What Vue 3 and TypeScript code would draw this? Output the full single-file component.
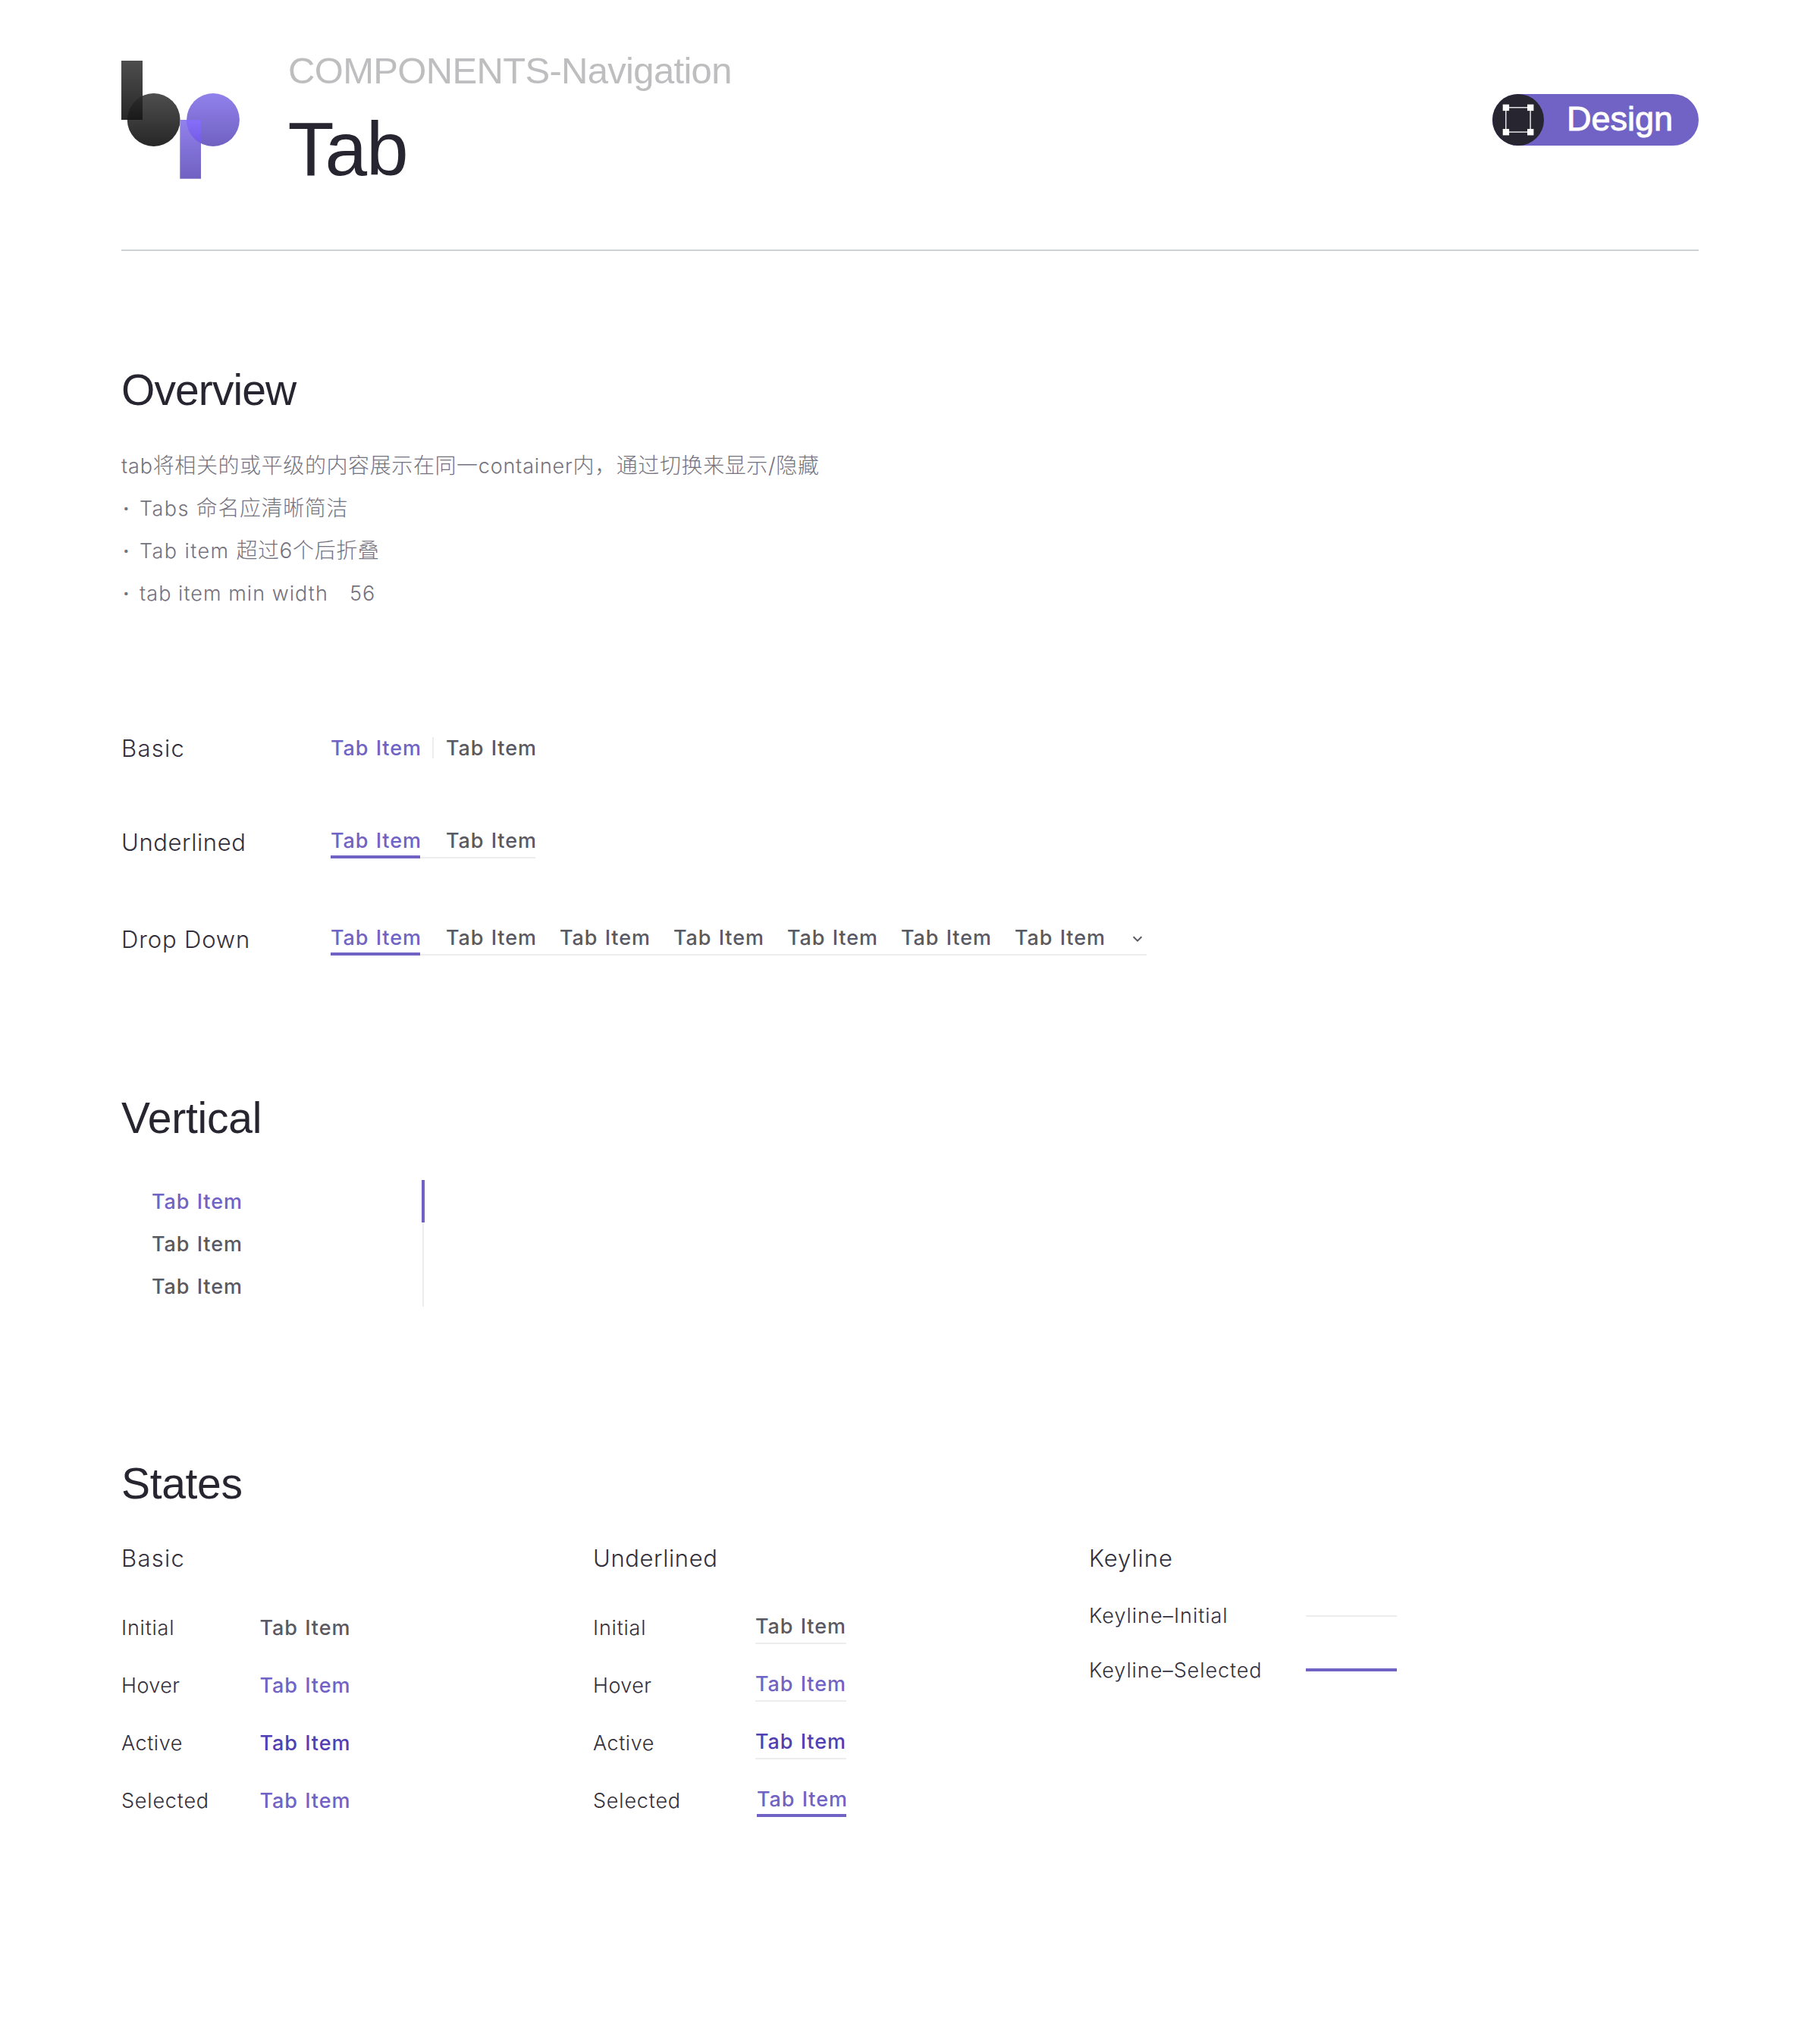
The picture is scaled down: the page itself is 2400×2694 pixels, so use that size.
<script setup lang="ts">
interface Label { text: string; ls: number }
interface StateRow extends Label { state: 'initial' | 'hover' | 'active' | 'selected' }

const rows: StateRow[] = [
  { text: 'Initial', ls: 0.8, state: 'initial' },
  { text: 'Hover', ls: 0.4, state: 'hover' },
  { text: 'Active', ls: 0.55, state: 'active' },
  { text: 'Selected', ls: 0.8, state: 'selected' },
]
const names: Record<string, Label> = {
  basic: { text: 'Basic', ls: 1.3 },
  underlined: { text: 'Underlined', ls: 0.6 },
  dropDown: { text: 'Drop Down', ls: 0.86 },
  keyline: { text: 'Keyline', ls: 0.95 },
}
const keylines: (Label & { kind: 'initial' | 'selected' })[] = [
  { text: 'Keyline–Initial', ls: 0.97, kind: 'initial' },
  { text: 'Keyline–Selected', ls: 0.92, kind: 'selected' },
]
const tracking = (l: Label) => ({ letterSpacing: `${l.ls}px` })
</script>

<template>
  <main class="page">
    <header class="header">
      <svg class="logo" width="157" height="156" viewBox="0 0 157 156">
        <defs>
          <linearGradient id="ink" x1="0" y1="0" x2="0" y2="1">
            <stop offset="0" stop-color="#4e4e4e" /><stop offset="1" stop-color="#272727" />
          </linearGradient>
          <linearGradient id="violet" x1="0" y1="0" x2="0" y2="1">
            <stop offset="0" stop-color="#9181ec" /><stop offset="1" stop-color="#7061c1" />
          </linearGradient>
          <linearGradient id="inkMix" x1="0" y1="0" x2="0" y2="1">
            <stop offset="0" stop-color="#2c2c2c" /><stop offset="1" stop-color="#191919" />
          </linearGradient>
          <linearGradient id="violetMix" x1="0" y1="0" x2="0" y2="1">
            <stop offset="0" stop-color="#866ff8" /><stop offset="1" stop-color="#745be6" />
          </linearGradient>
        </defs>
        <rect width="28" height="78" fill="url(#ink)" />
        <circle cx="42.7" cy="78" r="34.9" fill="url(#ink)" />
        <path d="M28 46.3A34.9 34.9 0 0 0 7.8 78H28Z" fill="url(#inkMix)" />
        <rect x="77.3" y="78" width="27.7" height="77.7" fill="url(#violet)" />
        <circle cx="121" cy="78" r="34.9" fill="url(#violet)" />
        <path d="M86.1 78H105V109A34.9 34.9 0 0 1 86.1 78Z" fill="url(#violetMix)" />
      </svg>
      <div class="titles">
        <div class="crumb">COMPONENTS-Navigation</div>
        <h1>Tab</h1>
      </div>
      <div class="pill">
        <svg width="68" height="68" viewBox="0 0 68 68">
          <circle cx="34" cy="34" r="34" fill="#272530" />
          <rect x="17.8" y="17.8" width="32.3" height="32.3" fill="none" stroke="#fff" stroke-width="1.3" />
          <g fill="#fff">
            <rect x="13.7" y="13.7" width="8.4" height="8.4" /><rect x="46" y="13.7" width="8.4" height="8.4" />
            <rect x="13.7" y="46" width="8.4" height="8.4" /><rect x="46" y="46" width="8.4" height="8.4" />
          </g>
        </svg>
        <span class="pill-text">Design</span>
      </div>
    </header>

    <section>
      <h2 class="h-overview">Overview</h2>
      <div class="copy" lang="zh-CN">
        <p><span class="w-tab">tab</span><span class="zh">将相关的或平级的内容展示在同一</span><span class="w-container">container</span><span class="zh">内，通过切换来显示/隐藏</span></p>
        <p><i>·</i><span class="w-tabs">Tabs </span><span class="zh">命名应清晰简洁</span></p>
        <p><i>·</i><span class="w-tabs">Tab item </span><span class="zh">超过6个后折叠</span></p>
        <p><i>·</i><span class="w-min">tab item min width</span><span class="w-num">56</span></p>
      </div>
    </section>

    <section class="variants">
      <div class="variant v-basic">
        <span class="label" :style="tracking(names.basic)">{{ names.basic.text }}</span>
        <div class="tabs">
          <span class="tab selected">Tab Item</span><span class="divider"></span><span class="tab">Tab Item</span>
        </div>
      </div>
      <div class="variant v-underlined">
        <span class="label" :style="tracking(names.underlined)">{{ names.underlined.text }}</span>
        <div class="tabs lined">
          <span class="tab selected">Tab Item</span><span class="tab">Tab Item</span>
        </div>
      </div>
      <div class="variant v-drop">
        <span class="label" :style="tracking(names.dropDown)">{{ names.dropDown.text }}</span>
        <div class="tabs lined">
          <span class="tab selected">Tab Item</span>
          <span v-for="n in 6" :key="n" class="tab">Tab Item</span>
          <svg class="chevron" width="24" height="16" viewBox="0 0 24 16">
            <path d="M6.6 5.2 12 10.6 17.4 5.2" fill="none" stroke="#5b5a63" stroke-width="2" />
          </svg>
        </div>
      </div>
    </section>

    <section>
      <h2 class="h-vertical">Vertical</h2>
      <div class="side">
        <div class="tab selected">Tab Item</div>
        <div class="tab">Tab Item</div>
        <div class="tab">Tab Item</div>
      </div>
    </section>

    <section>
      <h2 class="h-states">States</h2>
      <div class="columns">
        <div class="col col-basic">
          <h3 class="label" :style="tracking(names.basic)">{{ names.basic.text }}</h3>
          <div v-for="r in rows" :key="r.text" class="row">
            <span class="name" :style="tracking(r)">{{ r.text }}</span>
            <span class="tab" :class="r.state">Tab Item</span>
          </div>
        </div>
        <div class="col col-underlined">
          <h3 class="label" :style="tracking(names.underlined)">{{ names.underlined.text }}</h3>
          <div v-for="r in rows" :key="r.text" class="row">
            <span class="name" :style="tracking(r)">{{ r.text }}</span>
            <span class="tab" :class="r.state">Tab Item</span>
          </div>
        </div>
        <div class="col col-keyline">
          <h3 class="label" :style="tracking(names.keyline)">{{ names.keyline.text }}</h3>
          <div v-for="k in keylines" :key="k.text" class="row">
            <span class="name" :style="tracking(k)">{{ k.text }}</span>
            <span class="line" :class="k.kind"></span>
          </div>
        </div>
      </div>
    </section>
  </main>
</template>

<style>
body { background: #fff; }
</style>

<style scoped>
.page {
  box-sizing: border-box;
  width: 2400px;
  height: 2694px;
  padding: 0 160px;
  overflow: hidden;
  background: #fff;
  color: #272530;
  font-family: Inter, "Noto Sans CJK SC", sans-serif;
}
h1, h2, h3 { margin: 0; font-weight: 400; }
p { margin: 0; }

.header {
  box-sizing: border-box;
  display: flex;
  align-items: center;
  height: 331px;
  padding: 63px 0 76px;
  border-bottom: 2px solid #cdd2d6;
}
.logo { flex: none; display: block; }
.titles { margin-left: 62.5px; font-family: "Liberation Sans", Arial, sans-serif; }
.crumb { margin-left: 0.5px; font-size: 49px; line-height: 60px; letter-spacing: -0.68px; color: #bebec0; }
h1 { margin-top: 16px; font-size: 100px; line-height: 114px; letter-spacing: -1px; }
.pill {
  display: flex;
  align-items: center;
  box-sizing: border-box;
  width: 272px;
  height: 68px;
  margin-left: auto;
  border-radius: 34px;
  background: #7163c5;
}
.pill-text {
  margin-left: 30px;
  padding-bottom: 3px;
  font: 45px/68px "Liberation Sans", Arial, sans-serif;
  color: #fff;
  -webkit-text-stroke: 0.9px #fff;
}

h2 { font: 400 57px/68px "Liberation Sans", Arial, sans-serif; }
.h-overview { margin-top: 149px; letter-spacing: -0.9px; }
.h-vertical { margin-top: 180px; letter-spacing: -0.2px; }
.h-states { margin-top: 198px; letter-spacing: -0.32px; }

.copy { margin-top: 38px; font-size: 27px; font-weight: 300; color: #74727e; }
.copy p { display: flex; height: 56px; line-height: 57px; white-space: pre; }
.copy i { box-sizing: border-box; width: 24px; padding-left: 2px; font-style: normal; font-weight: 600; }
.zh { font-size: 28px; letter-spacing: 0.6px; }
.w-tab, .w-container { letter-spacing: 0.8px; }
.w-tabs { letter-spacing: 1.4px; }
.w-min { letter-spacing: 1.04px; }
.w-num { margin-left: 28px; letter-spacing: 1px; }

.variants { margin-top: 156px; }
.variant { display: flex; align-items: flex-start; }
.v-basic { height: 124px; }
.v-underlined { height: 128px; }
.v-drop { height: 42px; }
.label { display: block; font-size: 31px; font-weight: 360; line-height: 40px; color: #32303c; }
.variant .label { width: 276px; margin-top: 1px; }
.tab {
  font-size: 27px;
  font-weight: 540;
  line-height: 34px;
  letter-spacing: 0.9px;
  word-spacing: 1.2px;
  white-space: nowrap;
  color: #5a5962;
}
.tab.selected, .tab.hover { color: #7163c5; }
.tab.active { color: #5040b4; }
.tabs { position: relative; display: flex; margin-top: 2px; }
.v-basic .tabs { margin-top: 4px; }
.tabs .tab { width: 118px; }
.divider { width: 2px; height: 28px; margin: 2px 16px; background: #ededed; }
.lined { height: 40px; }
.lined::after {
  content: "";
  position: absolute;
  inset: auto 0 0 118px;
  height: 2px;
  background: #ededed;
}
.lined .tab + .tab { margin-left: 32px; }
.lined .tab.selected { box-sizing: border-box; height: 40px; margin-right: 2px; border-bottom: 4px solid #7163c5; }
.chevron { margin: 10px 0 0 32px; }

.side { width: 400px; height: 168px; margin-top: 48px; }
.side .tab { height: 56px; margin-right: 1px; padding-left: 40px; border-right: 2px solid #ededed; line-height: 57px; }
.side .tab:last-child { height: 55px; }
.side .tab.selected { margin-right: 0; border-right: 4px solid #7163c5; }

.columns { display: flex; margin-top: 45px; }
.col-basic { width: 622px; }
.col-underlined { width: 654px; }
.col h3 { margin-bottom: 33px; }
.row { display: flex; align-items: flex-start; height: 76px; }
.name { width: 182.5px; font-size: 27px; font-weight: 280; line-height: 77px; color: #32303c; }
.col-basic .tab { line-height: 77px; }
.col-underlined .name { width: 214px; }
.col-underlined .tab {
  box-sizing: border-box;
  width: 120px;
  height: 40px;
  margin-top: 20px;
  border-bottom: 2px solid #ededed;
}
.col-underlined .tab.selected { width: 118px; margin-left: 2px; border-bottom: 4px solid #7163c5; }
.col-keyline h3 { margin-bottom: 19px; }
.col-keyline .row { height: 72px; }
.col-keyline .name { width: 286px; line-height: 73px; }
.line { width: 120px; height: 2px; margin-top: 36px; background: #ededed; }
.line.selected { height: 4px; margin-top: 34px; background: #7163c5; }
</style>
